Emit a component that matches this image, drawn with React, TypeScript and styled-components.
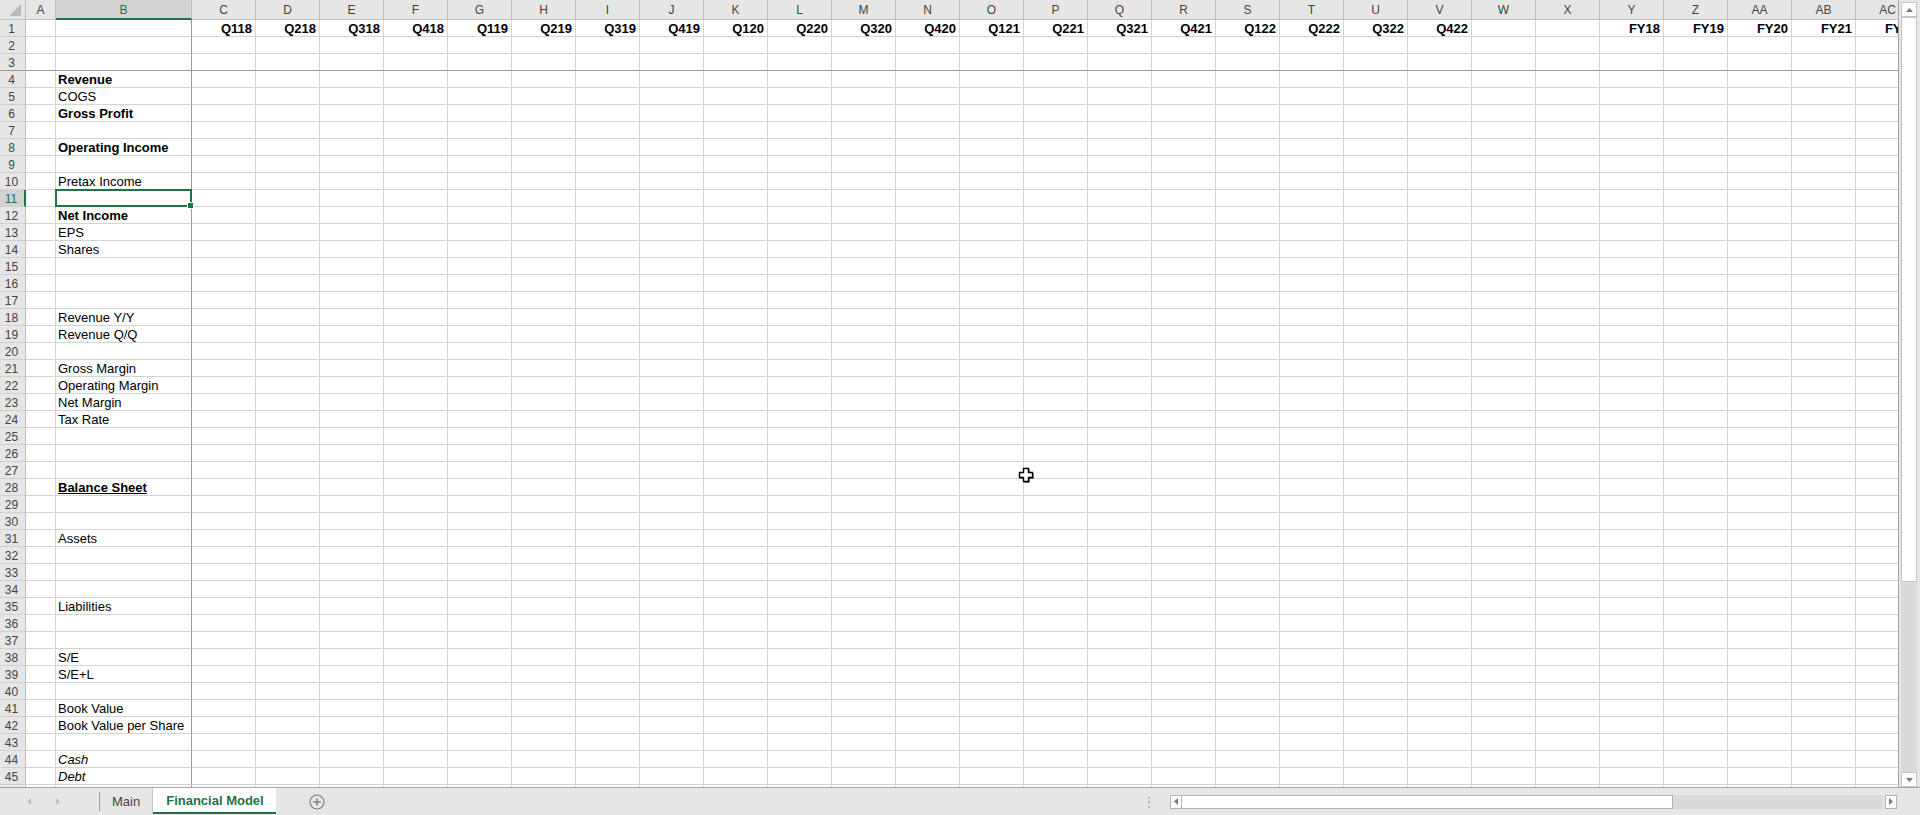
import React from 'react';
import styled, { createGlobalStyle, css } from 'styled-components';

const GREEN = '#217346';
const GRID_LINE = '#d4d4d4';
const FROZEN_LINE = '#9b9b9b';
const HEAD_BG = '#e6e6e6';
const HEAD_ACTIVE_BG = '#d2d2d2';
const HEAD_LINE = '#c0c0c0';
const CHROME_BG = '#e6e6e6';

const GlobalStyle = createGlobalStyle`
	html, body, #root {
		margin: 0;
		padding: 0;
		height: 100%;
		overflow: hidden;
	}
	body {
		font-family: 'Liberation Sans', Arial, sans-serif;
		background: ${CHROME_BG};
	}
`;

const colName = (i: number) => {
	let n = i + 1;
	let s = '';
	while (n > 0) {
		const r = (n - 1) % 26;
		s = String.fromCharCode(65 + r) + s;
		n = Math.floor((n - 1) / 26);
	}
	return s;
};

// A..AC
const COLUMNS = Array.from({ length: 29 }, (_, i) => colName(i));
const ROW_COUNT = 46;
const ACTIVE = { col: 'B', row: 11 };

// header row: quarters in C..V, fiscal years in Y..AC
const headerRow: Record<string, string> = {};
let qi = 0;
for (let y = 18; y <= 22; y++) {
	for (let q = 1; q <= 4; q++) {
		headerRow[COLUMNS[2 + qi]] = `Q${q}${y}`;
		qi++;
	}
}
['Y', 'Z', 'AA', 'AB', 'AC'].forEach((c, i) => {
	headerRow[c] = `FY${18 + i}`;
});

type Label = { text: string; bold?: boolean; italic?: boolean; underline?: boolean };

const labels: Record<number, Label> = {
	4: { text: 'Revenue', bold: true },
	5: { text: 'COGS' },
	6: { text: 'Gross Profit', bold: true },
	8: { text: 'Operating Income', bold: true },
	10: { text: 'Pretax Income' },
	12: { text: 'Net Income', bold: true },
	13: { text: 'EPS' },
	14: { text: 'Shares' },
	18: { text: 'Revenue Y/Y' },
	19: { text: 'Revenue Q/Q' },
	21: { text: 'Gross Margin' },
	22: { text: 'Operating Margin' },
	23: { text: 'Net Margin' },
	24: { text: 'Tax Rate' },
	28: { text: 'Balance Sheet', bold: true, underline: true },
	31: { text: 'Assets' },
	35: { text: 'Liabilities' },
	38: { text: 'S/E' },
	39: { text: 'S/E+L' },
	41: { text: 'Book Value' },
	42: { text: 'Book Value per Share' },
	44: { text: 'Cash', italic: true },
	45: { text: 'Debt', italic: true },
};

export default function App() {
	return (
		<>
			<GlobalStyle />
			<Workbook>
				<SheetArea>
					<Viewport>
						<SheetGrid>
							<Corner>
								<svg width="26" height="20" viewBox="0 0 26 20">
									<polygon points="22,5 22,17 10,17" fill="#b9b9b9" />
								</svg>
							</Corner>
							{COLUMNS.map((c) => (
								<ColHead key={c} $active={c === ACTIVE.col}>
									{c}
								</ColHead>
							))}
							{Array.from({ length: ROW_COUNT }, (_, ri) => {
								const row = ri + 1;
								const label = labels[row];
								return (
									<React.Fragment key={row}>
										<RowHead $active={row === ACTIVE.row} $frozen={row === 3}>
											{row}
										</RowHead>
										{COLUMNS.map((c) => {
											let content: React.ReactNode = null;
											if (row === 1 && headerRow[c]) content = headerRow[c];
											if (c === 'B' && label) content = label.text;
											return (
												<Cell
													key={c}
													$frozenRight={c === 'B'}
													$frozenBottom={row === 3}
													$right={row === 1}
													$bold={row === 1 || (c === 'B' && !!label?.bold)}
													$italic={c === 'B' && !!label?.italic}
													$underline={c === 'B' && !!label?.underline}
													$selected={c === ACTIVE.col && row === ACTIVE.row}
												>
													{content}
												</Cell>
											);
										})}
									</React.Fragment>
								);
							})}
						</SheetGrid>
						<Pointer width="16" height="17" viewBox="0 0 16 17">
							<path
								d="M5.5 1.5H10.5V5.5H14.5V10.5H10.5V14.5H5.5V10.5H1.5V5.5H5.5Z"
								fill="#000"
								transform="translate(1 1)"
							/>
							<path
								d="M5.5 1.5H10.5V5.5H14.5V10.5H10.5V14.5H5.5V10.5H1.5V5.5H5.5Z"
								fill="#fff"
								stroke="#000"
								strokeWidth="1.4"
							/>
						</Pointer>
					</Viewport>
					<VScroll>
						<ScrollButton>
							<svg width="7" height="4" viewBox="0 0 7 4">
								<polygon points="0,4 7,4 3.5,0" fill="#7a7a7a" />
							</svg>
						</ScrollButton>
						<VThumb />
						<Track />
						<ScrollButton>
							<svg width="7" height="4" viewBox="0 0 7 4">
								<polygon points="0,0 7,0 3.5,4" fill="#7a7a7a" />
							</svg>
						</ScrollButton>
					</VScroll>
				</SheetArea>
				<TabBar>
					<TabNav>
						<NavArrow>
							<svg width="4" height="7" viewBox="0 0 4 7">
								<polygon points="4,0 4,7 0,3.5" fill="#c2c2c2" />
							</svg>
						</NavArrow>
						<NavArrow>
							<svg width="4" height="7" viewBox="0 0 4 7">
								<polygon points="0,0 0,7 4,3.5" fill="#c2c2c2" />
							</svg>
						</NavArrow>
					</TabNav>
					<SheetTab>Main</SheetTab>
					<SheetTab $active>Financial Model</SheetTab>
					<AddSheet>
						<svg width="16" height="16" viewBox="0 0 16 16">
							<circle cx="8" cy="8" r="7" fill="none" stroke="#7f7f7f" strokeWidth="1.2" />
							<path d="M8 4.2V11.8M4.2 8H11.8" stroke="#7f7f7f" strokeWidth="1.4" />
						</svg>
					</AddSheet>
					<Spacer />
					<SplitDots>⋮</SplitDots>
					<HScroll>
						<HButton>
							<svg width="4" height="7" viewBox="0 0 4 7">
								<polygon points="4,0 4,7 0,3.5" fill="#7a7a7a" />
							</svg>
						</HButton>
						<HThumb />
						<HTrack />
						<HButton>
							<svg width="4" height="7" viewBox="0 0 4 7">
								<polygon points="0,0 0,7 4,3.5" fill="#7a7a7a" />
							</svg>
						</HButton>
					</HScroll>
				</TabBar>
			</Workbook>
		</>
	);
}

const Workbook = styled.div`
	display: flex;
	flex-direction: column;
	width: 1920px;
	height: 815px;
	background: ${CHROME_BG};
`;

const SheetArea = styled.div`
	display: flex;
	height: 788px;
	border-bottom: 1px solid #a6a6a6;
	box-sizing: border-box;
`;

const Viewport = styled.div`
	position: relative;
	flex: 1;
	overflow: hidden;
	background: #fff;
	border-right: 1px solid #a6a6a6;
`;

const SheetGrid = styled.div`
	display: grid;
	grid-template-columns: 26px 30px 136px repeat(27, 64px);
	grid-template-rows: 20px;
	grid-auto-rows: 17px;
	font-size: 13px;
	color: #000;
`;

const Corner = styled.div`
	background: ${HEAD_BG};
	border-right: 1px solid ${HEAD_LINE};
	border-bottom: 1px solid ${HEAD_LINE};
	box-sizing: border-box;
	svg {
		display: block;
		margin: -1px 0 0 -1px;
	}
`;

const ColHead = styled.div<{ $active?: boolean }>(
	({ $active }) => css`
		display: flex;
		align-items: center;
		justify-content: center;
		box-sizing: border-box;
		background: ${HEAD_BG};
		border-right: 1px solid ${HEAD_LINE};
		border-bottom: 1px solid ${HEAD_LINE};
		font-size: 12px;
		color: #444;
		padding-top: 1px;
		${$active &&
		css`
			background: ${HEAD_ACTIVE_BG};
			color: ${GREEN};
			border-bottom: 2px solid ${GREEN};
		`}
	`,
);

const RowHead = styled.div<{ $active?: boolean; $frozen?: boolean }>(
	({ $active, $frozen }) => css`
		display: flex;
		align-items: flex-end;
		justify-content: center;
		box-sizing: border-box;
		background: ${HEAD_BG};
		border-right: 1px solid ${HEAD_LINE};
		border-bottom: 1px solid ${$frozen ? FROZEN_LINE : '#d0d0d0'};
		font-size: 12px;
		line-height: 14px;
		padding-right: 2px;
		color: #444;
		${$active &&
		css`
			background: ${HEAD_ACTIVE_BG};
			color: ${GREEN};
			border-right: 2px solid ${GREEN};
		`}
	`,
);

const Cell = styled.div<{
	$frozenRight?: boolean;
	$frozenBottom?: boolean;
	$right?: boolean;
	$bold?: boolean;
	$italic?: boolean;
	$underline?: boolean;
	$selected?: boolean;
}>(
	({ $frozenRight, $frozenBottom, $right, $bold, $italic, $underline, $selected }) => css`
		position: relative;
		display: flex;
		align-items: flex-end;
		justify-content: ${$right ? 'flex-end' : 'flex-start'};
		box-sizing: border-box;
		padding: 0 3px 1px 2px;
		border-right: 1px solid ${$frozenRight ? FROZEN_LINE : GRID_LINE};
		border-bottom: 1px solid ${$frozenBottom ? FROZEN_LINE : GRID_LINE};
		line-height: 13px;
		white-space: nowrap;
		overflow: visible;
		font-weight: ${$bold ? 700 : 400};
		font-style: ${$italic ? 'italic' : 'normal'};
		text-decoration: ${$underline ? 'underline' : 'none'};
		${$selected &&
		css`
			&::after {
				content: '';
				position: absolute;
				left: -1px;
				top: -1px;
				right: -1px;
				bottom: -1px;
				border: 2px solid ${GREEN};
				pointer-events: none;
			}
			&::before {
				content: '';
				position: absolute;
				right: -3px;
				bottom: -3px;
				width: 5px;
				height: 5px;
				background: ${GREEN};
				border: 1px solid #fff;
				z-index: 1;
			}
		`}
	`,
);

const Pointer = styled.svg`
	position: absolute;
	left: 1018px;
	top: 467px;
`;

const VScroll = styled.div`
	display: flex;
	flex-direction: column;
	width: 21px;
	padding: 2px 3px 0 2px;
	box-sizing: border-box;
	background: ${CHROME_BG};
`;

const ScrollButton = styled.div`
	display: flex;
	align-items: center;
	justify-content: center;
	height: 15px;
	background: #fff;
	border: 1px solid #c6c6c6;
	box-sizing: border-box;
`;

const VThumb = styled.div`
	height: 565px;
	background: #fff;
	border: 1px solid #c6c6c6;
	box-sizing: border-box;
`;

const Track = styled.div`
	flex: 1;
	background: #dadada;
`;

const TabBar = styled.div`
	display: flex;
	align-items: stretch;
	height: 27px;
	background: ${CHROME_BG};
	font-size: 13px;
`;

const TabNav = styled.div`
	display: flex;
	align-items: center;
	gap: 25px;
	width: 100px;
	padding-left: 27px;
	box-sizing: border-box;
	border-right: 1px solid #9f9f9f;
	margin: 4px 0;
`;

const NavArrow = styled.div`
	display: flex;
	align-items: center;
`;

const SheetTab = styled.div<{ $active?: boolean }>(
	({ $active }) => css`
		display: flex;
		align-items: center;
		padding: 0 12px 1px 12px;
		color: #444;
		${$active
			? css`
					background: #fff;
					color: ${GREEN};
					font-weight: 700;
					padding: 0 12px 0 13px;
					border-bottom: 2px solid ${GREEN};
					margin-bottom: 1px;
			  `
			: css`
					border-right: 1px solid #c6c6c6;
					margin: 0;
			  `}
	`,
);

const AddSheet = styled.div`
	display: flex;
	align-items: center;
	margin-left: 33px;
`;

const Spacer = styled.div`
	flex: 1;
`;

const SplitDots = styled.div`
	display: flex;
	align-items: center;
	color: #9a9a9a;
	font-size: 12px;
	margin-right: 15px;
`;

const HScroll = styled.div`
	display: flex;
	align-self: center;
	width: 727px;
	height: 14px;
	margin-right: 23px;
`;

const HButton = styled.div`
	display: flex;
	align-items: center;
	justify-content: center;
	width: 12px;
	background: #fff;
	border: 1px solid #b4b4b4;
	box-sizing: border-box;
`;

const HThumb = styled.div`
	width: 491px;
	background: #fff;
	border: 1px solid #b4b4b4;
	border-left: none;
	box-sizing: border-box;
`;

const HTrack = styled.div`
	flex: 1;
	background: #dadada;
	margin-right: 2px;
`;
